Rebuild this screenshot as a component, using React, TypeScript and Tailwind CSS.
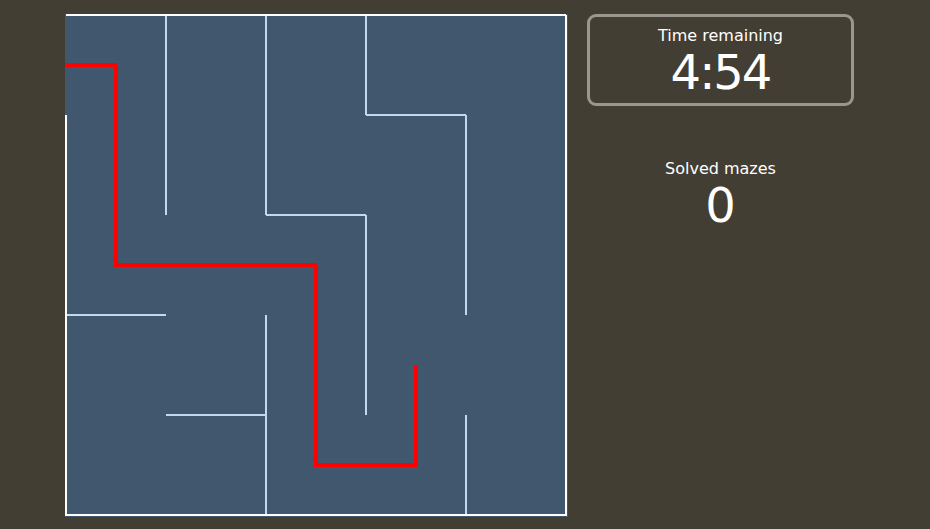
import React from "react"

const walls: [number, number, number, number][] = [
  // vertical
  [102, 2, 102, 202],
  [202, 2, 202, 202],
  [202, 302, 202, 502],
  [302, 2, 302, 102],
  [302, 202, 302, 402],
  [402, 102, 402, 302],
  [402, 402, 402, 502],
  // horizontal
  [302, 102, 402, 102],
  [202, 202, 302, 202],
  [2, 302, 102, 302],
  [102, 402, 202, 402],
]

const Maze = () => (
  <svg width="504" height="504" viewBox="0 0 504 504" className="block shrink-0">
    <rect x="1" y="1" width="503" height="503" fill="#41576e" />
    {walls.map(([x1, y1, x2, y2], i) => (
      <line key={i} x1={x1} y1={y1} x2={x2} y2={y2} stroke="#c3d8ee" strokeWidth="2" />
    ))}
    <polyline points="2,102 2,502 502,502 502,402" fill="none" stroke="#ffffff" strokeWidth="2" />
    <line x1="2" y1="2" x2="502" y2="2" stroke="#ffffff" strokeWidth="2" />
    <line x1="502" y1="2" x2="502" y2="402" stroke="#ffffff" strokeWidth="2" />
    <polyline
      points="1,52 52,52 52,252 252,252 252,452 352,452 352,352"
      fill="none"
      stroke="#ff0000"
      strokeWidth="4"
    />
  </svg>
)

export default function App() {
  return (
    <div
      className="w-[930px] h-[529px] bg-[#433e33] flex items-start pt-[13px] pl-[64px] gap-[19px] text-white"
      style={{ fontFamily: '"DejaVu Sans", Verdana, sans-serif' }}
    >
      <Maze />
      <div className="flex flex-col items-center w-[267px] pt-[1px]">
        <div className="w-full h-[92px] border-[3px] border-[#9a9790] rounded-[9px] flex flex-col items-center pt-[9px]">
          <div className="text-[16px] leading-[20px]">Time remaining</div>
          <div className="text-[48px] leading-[52px] tracking-[-2px]">4:54</div>
        </div>
        <div className="mt-[53px] text-[16px] leading-[20px]">Solved mazes</div>
        <div className="text-[48px] leading-[52px]">0</div>
      </div>
    </div>
  )
}
